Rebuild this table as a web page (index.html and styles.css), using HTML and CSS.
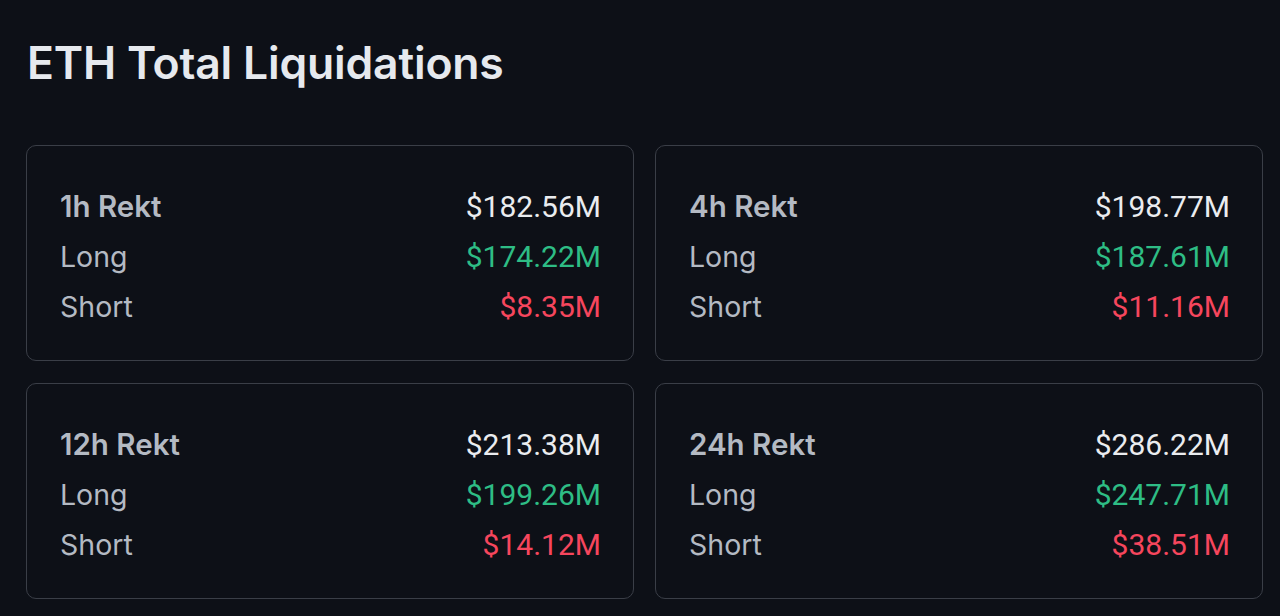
FILE: index.html
```html
<!DOCTYPE html>
<html>
<head>
<meta charset="utf-8">
<link rel="stylesheet" href="styles.css">
</head>
<body>
<div class="page">
  <h1 class="title">ETH Total Liquidations</h1>
  <div class="grid">
    <div class="card">
      <div class="row"><span class="label head">1h Rekt</span><span class="val">$182.56M</span></div>
      <div class="row"><span class="label">Long</span><span class="val up">$174.22M</span></div>
      <div class="row"><span class="label">Short</span><span class="val down">$8.35M</span></div>
    </div>
    <div class="card">
      <div class="row"><span class="label head">4h Rekt</span><span class="val">$198.77M</span></div>
      <div class="row"><span class="label">Long</span><span class="val up">$187.61M</span></div>
      <div class="row"><span class="label">Short</span><span class="val down">$11.16M</span></div>
    </div>
    <div class="card">
      <div class="row"><span class="label head">12h Rekt</span><span class="val">$213.38M</span></div>
      <div class="row"><span class="label">Long</span><span class="val up">$199.26M</span></div>
      <div class="row"><span class="label">Short</span><span class="val down">$14.12M</span></div>
    </div>
    <div class="card">
      <div class="row"><span class="label head">24h Rekt</span><span class="val">$286.22M</span></div>
      <div class="row"><span class="label">Long</span><span class="val up">$247.71M</span></div>
      <div class="row"><span class="label">Short</span><span class="val down">$38.51M</span></div>
    </div>
  </div>
</div>
</body>
</html>
```
FILE: styles.css
```css
html, body {
  margin: 0;
  padding: 0;
  background: #0d1017;
}
.page {
  width: 1280px;
  height: 616px;
  box-sizing: border-box;
  padding: 35px 17px 0 26px;
  font-family: Inter, "Noto Sans", sans-serif;
}
.title {
  margin: 0 0 54px 1px;
  font-size: 44.5px;
  line-height: 56px;
  font-weight: 600;
  color: #e6e9ee;
  letter-spacing: -0.2px;
}
.grid {
  display: grid;
  grid-template-columns: 1fr 1fr;
  column-gap: 21px;
  row-gap: 22px;
}
.card {
  height: 216px;
  box-sizing: border-box;
  border: 1.5px solid #3a3e47;
  border-radius: 10px;
  padding: 35px 32px 31px 33px;
}
.row {
  display: flex;
  justify-content: space-between;
  align-items: center;
  height: 50px;
}
.label {
  font-size: 28.5px;
  color: #b4bac3;
  font-weight: 400;
}
.label.head {
  font-weight: 600;
  font-size: 29.5px;
}
.val {
  font-family: Roboto, "Noto Sans", sans-serif;
  font-size: 30px;
  font-weight: 400;
  color: #eaecef;
  letter-spacing: 0px;
}
.val.up { color: #2ebd85; }
.val.down { color: #f6465d; }
```
